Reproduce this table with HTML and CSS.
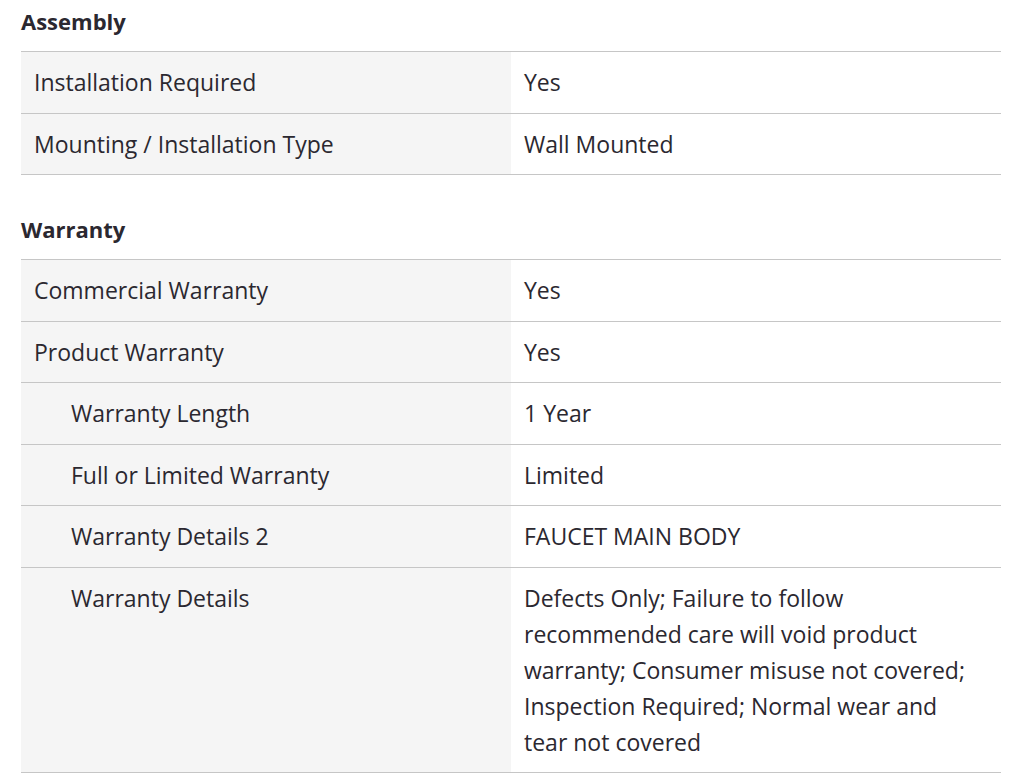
FILE: index.html
```html
<!DOCTYPE html>
<html>
<head>
<meta charset="utf-8">
<link rel="stylesheet" href="styles.css">
</head>
<body>
<div class="specs">
  <section class="group">
    <h2 class="group-title">Assembly</h2>
    <div class="table">
      <div class="row"><div class="key">Installation Required</div><div class="val">Yes</div></div>
      <div class="row"><div class="key">Mounting / Installation Type</div><div class="val">Wall Mounted</div></div>
    </div>
  </section>
  <section class="group">
    <h2 class="group-title">Warranty</h2>
    <div class="table">
      <div class="row"><div class="key">Commercial Warranty</div><div class="val">Yes</div></div>
      <div class="row"><div class="key">Product Warranty</div><div class="val">Yes</div></div>
      <div class="row"><div class="key sub">Warranty Length</div><div class="val">1 Year</div></div>
      <div class="row"><div class="key sub">Full or Limited Warranty</div><div class="val">Limited</div></div>
      <div class="row"><div class="key sub">Warranty Details 2</div><div class="val">FAUCET MAIN BODY</div></div>
      <div class="row"><div class="key sub">Warranty Details</div><div class="val">Defects Only; Failure to follow recommended care will void product warranty; Consumer misuse not covered; Inspection Required; Normal wear and tear not covered</div></div>
    </div>
  </section>
</div>
</body>
</html>
```
FILE: styles.css
```css
html, body {
  margin: 0;
  padding: 0;
  background: #ffffff;
}
body {
  font-family: "Open Sans", "Noto Sans", sans-serif;
  color: #2b2830;
  font-size: 23px;
}
.specs {
  width: 980px;
  padding: 3px 0 0 21px;
}
.group + .group {
  margin-top: 36px;
}
.group-title {
  margin: 0 0 12px 0;
  font-size: 22px;
  line-height: 36px;
  font-weight: 700;
}
.table {
  border-top: 1px solid #c6c6c6;
}
.row {
  display: grid;
  grid-template-columns: 490px 490px;
  border-bottom: 1px solid #c6c6c6;
}
.key, .val {
  padding: 12.25px 13px;
  line-height: 36px;
}
.key {
  background: #f5f5f5;
}
.key.sub {
  padding-left: 50px;
}
.val {
  background: #ffffff;
  padding-right: 28px;
}
```
